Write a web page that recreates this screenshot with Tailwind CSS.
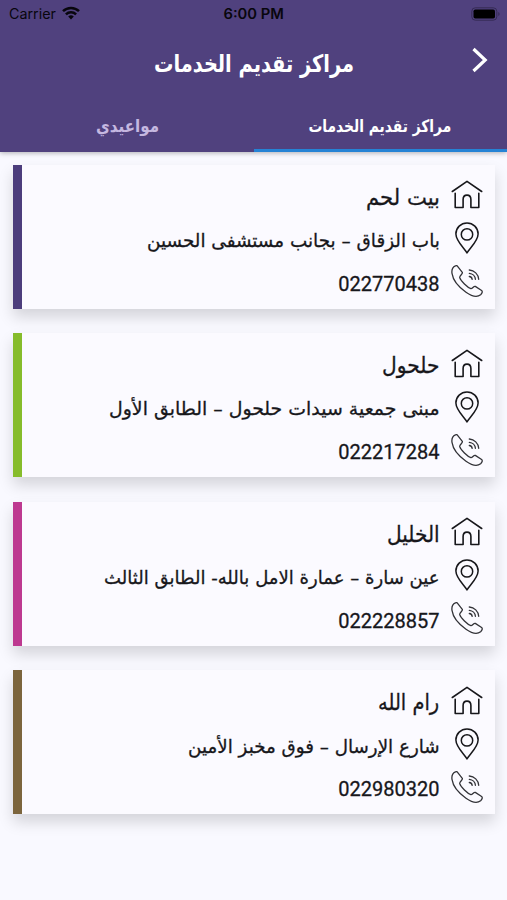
<!DOCTYPE html>
<html lang="ar">
<head>
  <meta charset="UTF-8" />
  <meta name="viewport" content="width=device-width, initial-scale=1.0" />
  <title>مراكز تقديم الخدمات</title>
  <script src="https://cdn.jsdelivr.net/npm/@tailwindcss/browser@4"></script>
</head>
<body class="bg-[#f9f9ff] h-[900px] overflow-hidden font-['DejaVu_Sans',sans-serif] text-[#17171b]">
  <header class="relative z-10 h-[152px] bg-[#50417e] shadow-[0_1px_5px_rgba(0,0,0,0.3)] flex flex-col">
    <!-- Status bar -->
    <div class="h-[28px] grid grid-cols-3 items-center pl-[9px] pr-[7px] text-[#08060d] font-[Inter,sans-serif]">
      <div class="flex items-center gap-[7px]">
        <span class="origin-left text-[14px] leading-none" data-width="47">Carrier</span>
        <svg class="w-[18px] h-[14px] -mt-[2px]" viewBox="0 0 18 14" fill="none" stroke="currentColor" stroke-width="2.5">
          <path d="M1 5.2C5.5.8 12.500.8 17 5.200" />
          <path d="M3.900 8.300C6.800 5.500 11.200 5.500 14.100 8.300" />
          <path d="M6.200 10.400Q9 8 11.800 10.400L9 13.400Z" fill="currentColor" stroke="none" />
        </svg>
      </div>
      <span class="justify-self-center text-[14px] leading-none font-semibold -ml-[2px]" data-width="60">6:00 PM</span>
      <svg class="justify-self-end w-[29px] h-[14px]" viewBox="0 0 29 14">
        <rect x="0.800" y="0.800" width="25" height="12.400" rx="3.500" fill="none" stroke="#352b55" stroke-width="1" />
        <rect x="2.500" y="2.500" width="21.500" height="9" rx="1.800" fill="#000" />
        <path d="M27.300 5v4q1.300-.600 1.300-2t-1.300-2z" fill="#352b55" />
      </svg>
    </div>

    <!-- Title -->
    <div class="h-[72px] grid grid-cols-[40px_1fr_40px] items-center text-white">
      <span></span>
      <h1 class="flex justify-center text-[24px] leading-none font-bold"><span class="whitespace-nowrap" dir="rtl" data-width="200">مراكز تقديم الخدمات</span></h1>
      <svg class="w-[16px] h-[26px] -ml-[2px] -mt-[8px] translate-x-[7px]" viewBox="0 0 16 26" fill="none" stroke="currentColor" stroke-width="3.2">
        <path d="M1.500 2 13.200 13 1.500 24" />
      </svg>
    </div>

    <!-- Tabs -->
    <nav class="flex-1 grid grid-cols-2 text-[17px] leading-none font-bold text-white">
      <div class="flex items-center justify-center pl-[2px] text-[#c5b8e0]"><span class="whitespace-nowrap" dir="rtl" data-width="63">مواعيدي</span></div>
      <div class="flex items-center justify-center border-b-[3px] border-[#2583d5] pt-[3px]"><span class="whitespace-nowrap" dir="rtl" data-width="143">مراكز تقديم الخدمات</span></div>
    </nav>
  </header>

  <main id="centers" class="pt-[12.5px] pl-[13px] pr-[12.5px] flex flex-col gap-[24.6px]"></main>

  <script>
    const centers = [
      { city: "بيت لحم", cityWidth: 74, address: "باب الزقاق – بجانب مستشفى الحسين", addressWidth: 293, phone: "022770438", color: "#4c3d7c" },
      { city: "حلحول", cityWidth: 57, address: "مبنى جمعية سيدات حلحول – الطابق الأول", addressWidth: 331, phone: "022217284", color: "#86bc2b" },
      { city: "الخليل", cityWidth: 53, address: "عين سارة – عمارة الامل بالله- الطابق الثالث", addressWidth: 336, phone: "022228857", color: "#bd3990" },
      { city: "رام الله", cityWidth: 61, address: "شارع الإرسال – فوق مخبز الأمين", addressWidth: 252, phone: "022980320", color: "#7c653d" }
    ];

    document.getElementById("centers").innerHTML = centers.map(c => `
      <article class="h-[144px] bg-[#fbfaff] flex shadow-[0_8px_14px_rgba(0,0,0,0.15)]">
        <div class="w-[9px]" style="background-color: ${c.color}"></div>
        <div class="flex-1 flex flex-col pt-[9px] pr-[12px]">
          <div class="h-[43px] flex items-center justify-end gap-[11px]">
            <span class="origin-right whitespace-nowrap text-[22px] leading-none pt-[5px] [-webkit-text-stroke:0.3px]" dir="rtl" data-width="${c.cityWidth}">${c.city}</span>
            <svg class="w-[32px] h-[32px]" viewBox="0 0 32 32" fill="none" stroke="currentColor" stroke-width="1.600" stroke-linecap="round" stroke-linejoin="round">
              <path d="M1.300 12.500 16 2.300 30.700 12.500" />
              <path d="M4.200 14.300V28.500H12.100V20.500C12.100 14.700 19.900 14.700 19.900 20.500V28.500H27.800V14.300" />
            </svg>
          </div>
          <div class="h-[43px] flex items-center justify-end gap-[11px]">
            <span class="origin-right whitespace-nowrap text-[18.5px] leading-none pt-[6px] [-webkit-text-stroke:0.3px]" dir="rtl" data-width="${c.addressWidth}">${c.address}</span>
            <svg class="w-[32px] h-[32px]" viewBox="0 0 32 32" fill="none" stroke="currentColor" stroke-width="1.500" stroke-linejoin="round">
              <path d="M16 31C13.500 26.500 4.900 19 4.900 12A11.100 11.100 0 0 1 27.100 12C27.100 19 18.500 26.500 16 31Z" />
              <circle cx="16" cy="12.400" r="5.700" />
            </svg>
          </div>
          <div class="h-[43px] flex items-center justify-end gap-[11px]">
            <span class="origin-right text-[20px] leading-none pt-[5px] font-[Roboto,sans-serif] [-webkit-text-stroke:0.3px]" data-width="101">${c.phone}</span>
            <svg class="w-[32px] h-[32px]" viewBox="0 0 32 32" fill="none" stroke="#333338" stroke-width="1.300" stroke-linecap="round" stroke-linejoin="round">
              <path d="M6.200.900 11.300 7.400C12.300 8.800 8.300 10.500 8.700 12.600C9.800 16 16.500 22.600 19.900 23.700C21.400 23.900 22.700 20.800 24.300 21.400L30.600 25.500C31.900 26.500 31 28.400 29.600 29.700C26.500 32.300 20.800 31.300 15 27.200C8 22.300 2 15.300 1 8.400C.500 4.900 2 2 4.400.900Q5.300.400 6.200.900Z" />
              <path d="M18.300 5C23.300 5.300 27.400 9.300 27.700 14.300M18.300 8.300C21.600 8.600 24.200 11.200 24.400 14.300M18.300 11.500C19.900 11.700 21 12.800 21.200 14.300" />
            </svg>
          </div>
        </div>
      </article>
    `).join("");

    const fit = el => {
      el.style.transform = `scaleX(${el.dataset.width / el.offsetWidth})`;
    };
    const observer = new ResizeObserver(entries => entries.forEach(e => fit(e.target)));
    document.querySelectorAll("[data-width]").forEach(el => observer.observe(el));
  </script>
</body>
</html>
